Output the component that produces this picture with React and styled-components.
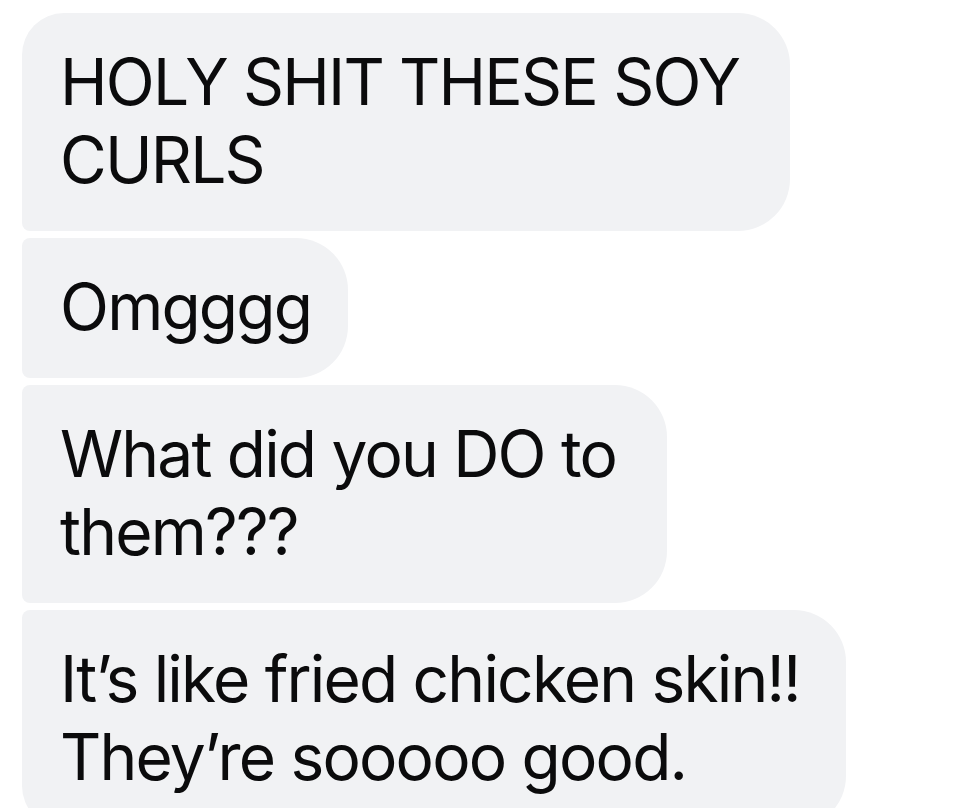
import React from 'react'
import styled, { createGlobalStyle } from 'styled-components'

const Global = createGlobalStyle`
body {
  margin: 0;
  background: #ffffff;
  font-family: Inter, "Liberation Sans", sans-serif;
}
`

const Thread = styled.div`
display: flex;
flex-direction: column;
align-items: flex-start;
gap: 7px;
padding: 13px 0 0 22px;
height: 808px;
box-sizing: border-box;
overflow: hidden;
`

const Bubble = styled.div`
box-sizing: border-box;
width: ${p => p.w}px;
padding: 30px 20px 32px 38px;
background: #f1f2f4;
color: #0b0b0c;
font-size: 64px;
line-height: 78px;
letter-spacing: -1.8px;
white-space: nowrap;
border-radius: ${p => p.first ? '42px' : '8px'} 52px 52px ${p => p.last ? '42px' : '8px'};
`

const messages = [
  { w: 768, lines: ['HOLY SHIT THESE SOY', 'CURLS'], first: true },
  { w: 326, lines: ['Omgggg'] },
  { w: 645, lines: ['What did you DO to', 'them???'] },
  { w: 824, lines: ['It\u2019s like fried chicken skin!!', 'They\u2019re sooooo good.'], last: true },
]

const App = () => (
  <>
    <Global />
    <Thread>
      {messages.map((m, i) => (
        <Bubble key={i} w={m.w} first={m.first} last={m.last}>
          {m.lines.map((l, j) => (
            <React.Fragment key={j}>
              {j > 0 && <br />}
              {l}
            </React.Fragment>
          ))}
        </Bubble>
      ))}
    </Thread>
  </>
)

export default App
